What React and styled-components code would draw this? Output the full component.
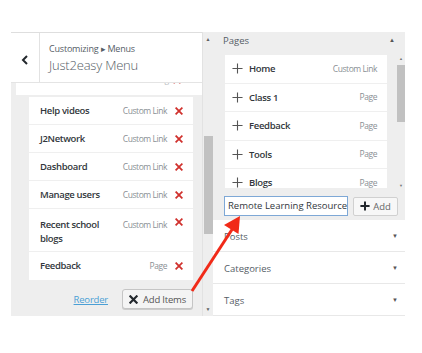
import styled, { createGlobalStyle } from "styled-components";

const GlobalStyle = createGlobalStyle`
  html, body { margin: 0; padding: 0; background: #fff; }
  body {
    font-family: "Open Sans", "Noto Sans", sans-serif;
    color: #23282d;
  }
  * { box-sizing: border-box; }
`;

const menuItems = [
  { label: "Help videos", type: "Custom Link" },
  { label: "J2Network", type: "Custom Link" },
  { label: "Dashboard", type: "Custom Link" },
  { label: "Manage users", type: "Custom Link" },
  { label: "Recent school blogs", type: "Custom Link", tall: true },
  { label: "Feedback", type: "Page" },
];

const pages = [
  { label: "Home", type: "Custom Link" },
  { label: "Class 1", type: "Page" },
  { label: "Feedback", type: "Page" },
  { label: "Tools", type: "Page" },
  { label: "Blogs", type: "Page" },
];

const sections = ["Posts", "Categories", "Tags"];

function Cross({ size = 8, color = "#d0312d", weight = 2.2 }) {
  return (
    <svg width={size} height={size} viewBox="0 0 10 10">
      <path
        d="M1.5 1.5 L8.5 8.5 M8.5 1.5 L1.5 8.5"
        stroke={color}
        strokeWidth={weight}
        strokeLinecap="square"
      />
    </svg>
  );
}

function Plus({ size = 11, weight = 1.2, color = "#555" }) {
  return (
    <svg width={size} height={size} viewBox="0 0 12 12">
      <path d="M6 0.5 V11.5 M0.5 6 H11.5" stroke={color} strokeWidth={weight} />
    </svg>
  );
}

function Scrollbar({ thumbTop, thumbHeight, height }) {
  return (
    <ScrollTrack style={{ height }}>
      <ScrollArrow>▲</ScrollArrow>
      <ScrollThumb style={{ marginTop: thumbTop, height: thumbHeight }} />
      <ScrollArrow $bottom>▼</ScrollArrow>
    </ScrollTrack>
  );
}

function App() {
  return (
    <>
      <GlobalStyle />
      <Stage>
        <LeftPanel>
          <LeftContent>
            <Header>
              <BackButton>
                <svg width="8" height="10" viewBox="0 0 8 10">
                  <path d="M6 1 L2 5 L6 9" stroke="#23282d" strokeWidth="2" fill="none" />
                </svg>
              </BackButton>
              <HeaderText>
                <Crumb>Customizing ▸ Menus</Crumb>
                <MenuTitle>Just2easy Menu</MenuTitle>
              </HeaderText>
            </Header>

            <PeekRow>
              <PeekInner>
                <ItemLabel>Tools</ItemLabel>
                <ItemType>Page</ItemType>
                <Cross />
              </PeekInner>
            </PeekRow>

            <ItemList>
              {menuItems.map((item) => (
                <MenuRow key={item.label} $tall={item.tall}>
                  <ItemLabel $wrap={item.tall}>{item.label}</ItemLabel>
                  <ItemType>{item.type}</ItemType>
                  <Cross />
                </MenuRow>
              ))}
            </ItemList>

            <Footer>
              <ReorderLink>Reorder</ReorderLink>
              <AddItemsButton>
                <Cross size={9} color="#23282d" weight={2.4} />
                Add Items
              </AddItemsButton>
            </Footer>
          </LeftContent>
          <Scrollbar thumbTop={93} thumbHeight={98} height={284} />
        </LeftPanel>

        <RightPanel>
          <PagesSection>
            <SectionHead>
              Pages
              <Caret>▲</Caret>
            </SectionHead>
            <ListWrap>
              <PageList>
                {pages.map((p) => (
                  <PageRow key={p.label}>
                    <Plus />
                    <PageLabel>{p.label}</PageLabel>
                    <ItemType>{p.type}</ItemType>
                  </PageRow>
                ))}
              </PageList>
              <SmallScroll>
                <MiniArrow>▲</MiniArrow>
                <MiniThumb />
                <MiniArrow>▼</MiniArrow>
              </SmallScroll>
            </ListWrap>
            <InputRow>
              <TextInput>Remote Learning Resources</TextInput>
              <AddButton>
                <Plus size={10} weight={2.4} color="#23282d" />
                Add
              </AddButton>
            </InputRow>
          </PagesSection>
          {sections.map((s) => (
            <AccordionRow key={s}>
              {s}
              <Caret>▼</Caret>
            </AccordionRow>
          ))}
        </RightPanel>

        <ArrowOverlay width="422" height="353" viewBox="0 0 422 353">
          <line x1="192" y1="291" x2="233" y2="228" stroke="#f12a18" strokeWidth="3" />
          <polygon points="240,216 238.5,234 224,225" fill="#f12a18" />
        </ArrowOverlay>
      </Stage>
    </>
  );
}

const Stage = styled.div`
  position: relative;
  width: 422px;
  height: 353px;
  padding: 32px 0 0 11px;
  display: flex;
  align-items: flex-start;
`;

const LeftPanel = styled.section`
  width: 202px;
  height: 284px;
  background: #eeeeee;
  display: grid;
  grid-template-columns: 191px 11px;
  overflow: hidden;
`;

const LeftContent = styled.div`
  display: flex;
  flex-direction: column;
`;

const Header = styled.div`
  height: 51px;
  background: #fff;
  border-top: 1px solid #dedede;
  border-bottom: 1px solid #e4e4e4;
  display: flex;
`;

const BackButton = styled.div`
  width: 29px;
  border-right: 1px solid #e2e2e2;
  display: flex;
  align-items: center;
  justify-content: center;
  padding-top: 4px;
`;

const HeaderText = styled.div`
  padding: 9px 0 0 9px;
  display: flex;
  flex-direction: column;
`;

const Crumb = styled.div`
  font-size: 9px;
  color: #555d66;
  line-height: 13px;
  letter-spacing: -0.2px;
`;

const MenuTitle = styled.div`
  font-size: 13px;
  color: #555d66;
  line-height: 20px;
  font-weight: 300;
  letter-spacing: -0.2px;
`;

const PeekRow = styled.div`
  margin-left: 5px;
  height: 12px;
  background: #fff;
  overflow: hidden;
`;

const PeekInner = styled.div`
  height: 28px;
  margin-top: -17px;
  padding: 0 21px 0 24px;
  display: flex;
  align-items: center;
  opacity: 0.6;
`;

const ItemList = styled.div`
  margin: 2px 9px 0 18px;
  background: #fff;
`;

const MenuRow = styled.div`
  height: ${(p) => (p.$tall ? "43px" : "28px")};
  padding: ${(p) => (p.$tall ? "9px 10px 0 11px" : "0 10px 0 11px")};
  border-bottom: 1px solid #efefef;
  display: flex;
  align-items: ${(p) => (p.$tall ? "flex-start" : "center")};
  gap: 8px;
  &:last-child { border-bottom: none; }
`;

const ItemLabel = styled.div`
  flex: 1;
  font-size: 9.5px;
  font-weight: 600;
  color: #32373c;
  line-height: 14px;
  letter-spacing: -0.35px;
  max-width: ${(p) => (p.$wrap ? "64px" : "none")};
  margin-right: ${(p) => (p.$wrap ? "auto" : "0")};
`;

const ItemType = styled.div`
  font-size: 8.5px;
  color: #8a8f94;
  line-height: 14px;
  letter-spacing: -0.45px;
  margin-left: auto;
`;

const Footer = styled.div`
  margin: 9px 9px 0 0;
  display: flex;
  justify-content: flex-end;
  align-items: center;
  gap: 14px;
`;

const ReorderLink = styled.a`
  font-size: 9.5px;
  color: #4b9fd5;
  text-decoration: underline;
  letter-spacing: -0.2px;
`;

const AddItemsButton = styled.button`
  width: 71px;
  height: 20px;
  border: 1px solid #c5c5c5;
  border-radius: 3px;
  background: #f4f4f4;
  box-shadow: 0 1px 0 #ccc;
  font-family: inherit;
  font-size: 9.5px;
  letter-spacing: -0.2px;
  color: #555;
  display: flex;
  align-items: center;
  justify-content: center;
  gap: 5px;
  padding: 0;
`;

const ScrollTrack = styled.div`
  background: #eeeeee;
  border-left: 1px solid #e2e2e2;
  display: flex;
  flex-direction: column;
  align-items: center;
`;

const ScrollArrow = styled.div`
  font-size: 5px;
  color: #606060;
  line-height: 8px;
  margin-top: ${(p) => (p.$bottom ? "auto" : "3px")};
  margin-bottom: ${(p) => (p.$bottom ? "3px" : "0")};
`;

const ScrollThumb = styled.div`
  width: 9px;
  background: #c1c1c1;
`;

const RightPanel = styled.section`
  width: 192px;
  height: 285px;
  display: flex;
  flex-direction: column;
`;

const PagesSection = styled.div`
  background: #eeeeee;
  height: 188px;
  display: flex;
  flex-direction: column;
`;

const SectionHead = styled.div`
  height: 16px;
  margin-bottom: 7px;
  padding: 0 10px 0 10px;
  display: flex;
  align-items: center;
  font-size: 9.5px;
  color: #555d66;
`;

const Caret = styled.span`
  margin-left: auto;
  font-size: 6px;
  color: #555;
`;

const ListWrap = styled.div`
  display: flex;
  padding-left: 12px;
  gap: 10px;
`;

const PageList = styled.div`
  width: 162px;
  height: 133px;
  background: #fff;
  overflow: hidden;
`;

const PageRow = styled.div`
  height: 28.5px;
  border-bottom: 1px solid #efefef;
  display: flex;
  align-items: center;
  padding: 0 10px 0 7px;
  gap: 6px;
`;

const PageLabel = styled.div`
  font-size: 9.5px;
  font-weight: 600;
  color: #32373c;
  letter-spacing: -0.3px;
`;

const SmallScroll = styled.div`
  width: 8px;
  height: 135px;
  display: flex;
  flex-direction: column;
  align-items: center;
`;

const MiniArrow = styled.div`
  font-size: 4px;
  line-height: 8px;
  color: #777;
`;

const MiniThumb = styled.div`
  width: 8px;
  flex: 1;
  background: #c1c1c1;
  margin: 2px 0 60px;
`;

const InputRow = styled.div`
  display: flex;
  align-items: center;
  gap: 5px;
  padding-left: 11px;
  margin-top: 6px;
`;

const TextInput = styled.div`
  width: 124px;
  height: 20px;
  border: 1px solid #7ea8d6;
  background: #fff;
  font-size: 9.5px;
  line-height: 18px;
  padding-left: 3px;
  white-space: nowrap;
  overflow: hidden;
  color: #32373c;
`;

const AddButton = styled.button`
  width: 45px;
  height: 19px;
  border: 1px solid #d0d0d0;
  border-radius: 2px;
  background: #f7f7f7;
  font-family: inherit;
  font-size: 9.5px;
  color: #666;
  display: flex;
  align-items: center;
  justify-content: center;
  gap: 3px;
  padding: 0;
`;

const AccordionRow = styled.div`
  height: 32px;
  background: #fff;
  border-bottom: 1px solid #e8e8e8;
  display: flex;
  align-items: center;
  padding: 1px 7px 0 11px;
  font-size: 9.5px;
  color: #555d66;
`;

const ArrowOverlay = styled.svg`
  position: absolute;
  left: 0;
  top: 0;
  pointer-events: none;
`;

export default App;
